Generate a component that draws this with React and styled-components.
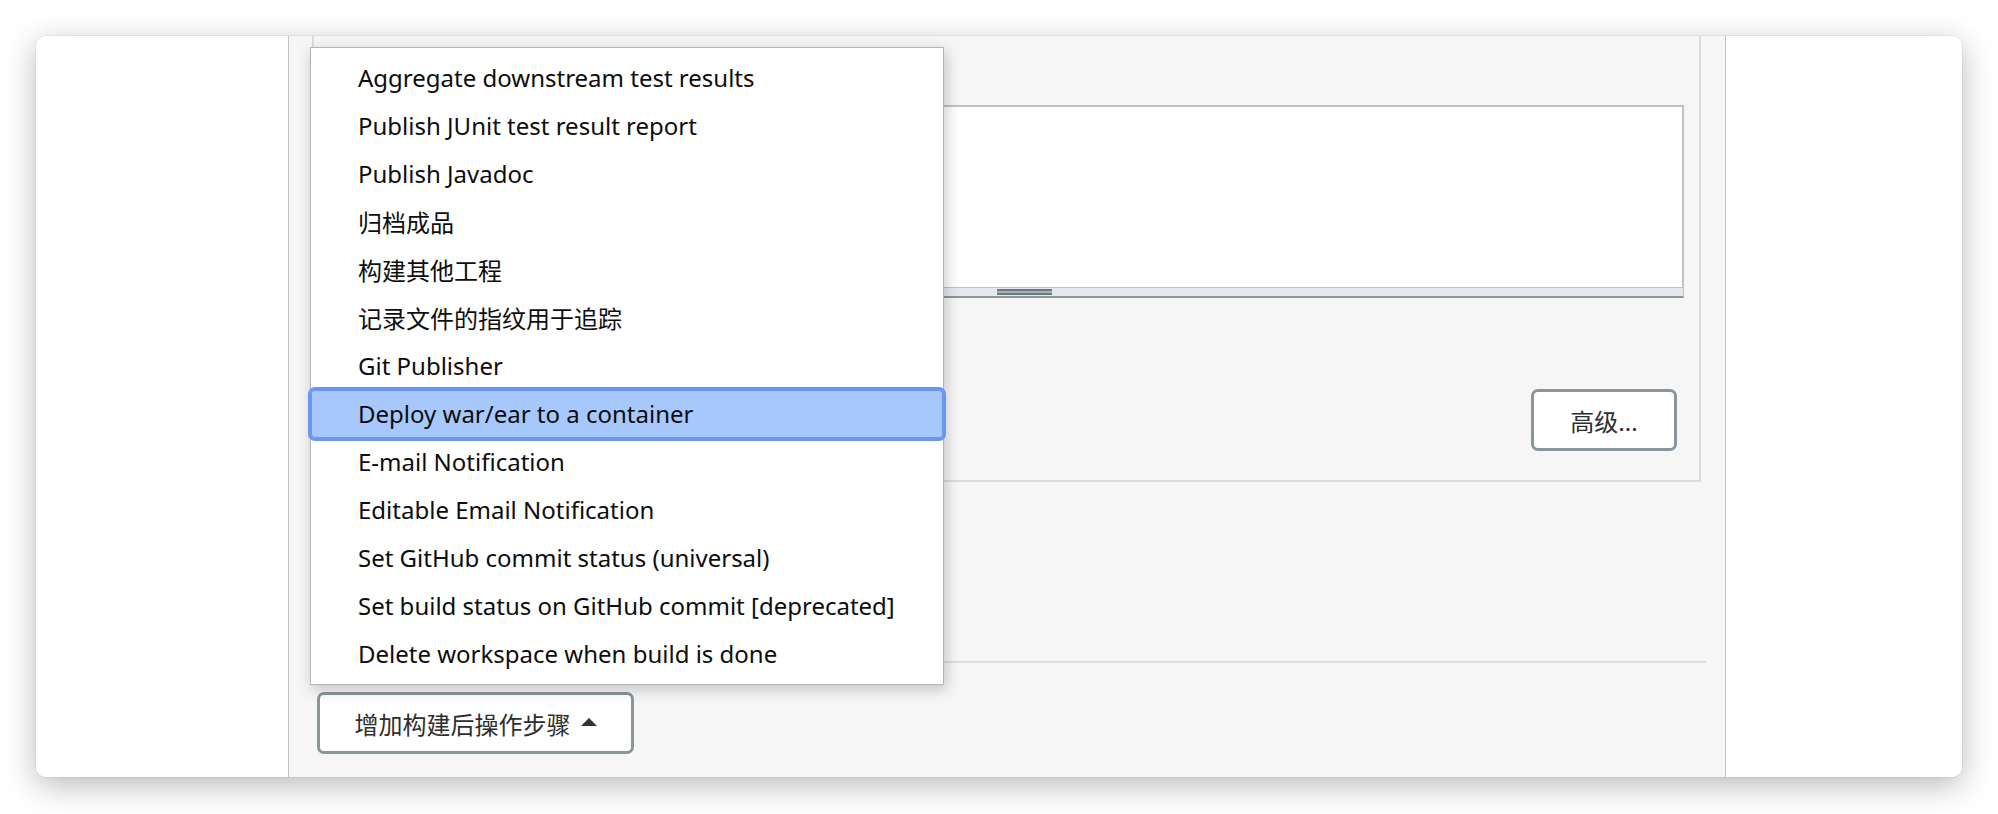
import React from "react";
import styled, { createGlobalStyle } from "styled-components";

const GlobalStyle = createGlobalStyle`
  html, body {
    margin: 0;
    padding: 0;
    background: #ffffff;
  }
  body {
    font-family: "Noto Sans", "Noto Sans CJK SC", sans-serif;
    color: #111;
  }
`;

const postBuildSteps = [
  "Aggregate downstream test results",
  "Publish JUnit test result report",
  "Publish Javadoc",
  "归档成品",
  "构建其他工程",
  "记录文件的指纹用于追踪",
  "Git Publisher",
  "Deploy war/ear to a container",
  "E-mail Notification",
  "Editable Email Notification",
  "Set GitHub commit status (universal)",
  "Set build status on GitHub commit [deprecated]",
  "Delete workspace when build is done",
];

export default function App() {
  const active = "Deploy war/ear to a container";

  return (
    <>
      <GlobalStyle />
      <Page>
        <Window>
          <SideColumn />
          <Main>
            <Section>
              <FieldRow>
                <TextArea readOnly value="" />
                <ResizeBar>
                  <Grip />
                </ResizeBar>
              </FieldRow>
              <ButtonRow>
                <Button>高级...</Button>
              </ButtonRow>
            </Section>
            <Divider />
            <AddRow>
              <Button $wide>
                增加构建后操作步骤
                <Caret />
              </Button>
            </AddRow>
          </Main>
          <SideColumn />

          {/* dropdown opened from the add button */}
          <Menu>
            {postBuildSteps.map((step) => (
              <MenuItem key={step} $active={step === active}>
                {step}
              </MenuItem>
            ))}
          </Menu>
        </Window>
      </Page>
    </>
  );
}

// Styled-components

const Page = styled.div`
  width: 1998px;
  height: 814px;
  padding: 36px;
  box-sizing: border-box;
  overflow: hidden;
`;

const Window = styled.div`
  position: relative;
  width: 1926px;
  height: 741px;
  border-radius: 10px;
  overflow: hidden;
  background: #fff;
  display: grid;
  grid-template-columns: 252px 1fr 236px;
  box-shadow: 0 8px 32px rgba(0, 0, 0, 0.28), 0 0 0 1px rgba(0, 0, 0, 0.04);
`;

const SideColumn = styled.div`
  background: #fff;
`;

const Main = styled.div`
  background: #f6f6f6;
  border-left: 1px solid #c4c4c4;
  border-right: 1px solid #c4c4c4;
  padding: 0 24px 0 23px;
  display: flex;
  flex-direction: column;
`;

const Section = styled.div`
  border: 2px solid #dcdcdc;
  border-top: none;
  padding: 69px 15px 29px 50px;
  display: flex;
  flex-direction: column;
`;

const FieldRow = styled.div`
  display: flex;
  flex-direction: column;
`;

const TextArea = styled.textarea`
  display: block;
  height: 183px;
  box-sizing: border-box;
  margin: 0;
  border: 2px solid #c2c2c2;
  border-bottom-width: 1px;
  background: #fff;
  resize: none;
  outline: none;
`;

const ResizeBar = styled.div`
  height: 10px;
  box-sizing: border-box;
  background: #e5e9ed;
  border: 1px solid #c2c2c2;
  border-top: none;
  border-bottom: 2px solid #8a959c;
  display: flex;
  justify-content: center;
  align-items: center;
`;

const Grip = styled.div`
  width: 55px;
  height: 6px;
  background: linear-gradient(
    #6f7a80 0,
    #6f7a80 2px,
    #aab1b5 2px,
    #aab1b5 4px,
    #6f7a80 4px
  );
`;

const ButtonRow = styled.div`
  display: flex;
  justify-content: flex-end;
  margin-top: 91px;
  padding-right: 7px;
`;

const Button = styled.div`
  display: inline-flex;
  align-items: center;
  justify-content: center;
  gap: 10px;
  box-sizing: border-box;
  height: 62px;
  width: ${(p) => (p.$wide ? "317px" : "146px")};
  border: 3px solid #8a959c;
  border-radius: 7px;
  background: #fff;
  color: #2e2e2e;
  font-size: 24px;
  font-family: "Noto Sans", "Noto Sans CJK SC", sans-serif;
`;

const Caret = styled.span`
  width: 0;
  height: 0;
  border-left: 8px solid transparent;
  border-right: 8px solid transparent;
  border-bottom: 8px solid #333;
  margin-top: -2px;
`;

const Divider = styled.div`
  margin-top: 179px;
  margin-right: -5px;
  border-top: 2px solid #dcdcdc;
`;

const AddRow = styled.div`
  margin-top: 29px;
  padding-left: 5px;
  display: flex;
`;

const Menu = styled.div`
  position: absolute;
  left: 274px;
  top: 11px;
  width: 634px;
  box-sizing: border-box;
  padding: 6px 0;
  background: #fff;
  border: 1px solid #b5b5b5;
  box-shadow: 2px 4px 14px rgba(0, 0, 0, 0.22);
  display: flex;
  flex-direction: column;
`;

const MenuItem = styled.div`
  height: 48px;
  box-sizing: border-box;
  display: flex;
  align-items: center;
  padding: 0 0 2px 47px;
  font-size: 24px;
  color: #0d0d0d;
  white-space: nowrap;
  border-radius: 4px;
  background: ${(p) => (p.$active ? "#a6c8fd" : "transparent")};
  box-shadow: ${(p) =>
    p.$active ? "0 0 0 3px #6a96f0, inset 0 0 0 1px #6a96f0" : "none"};
`;
